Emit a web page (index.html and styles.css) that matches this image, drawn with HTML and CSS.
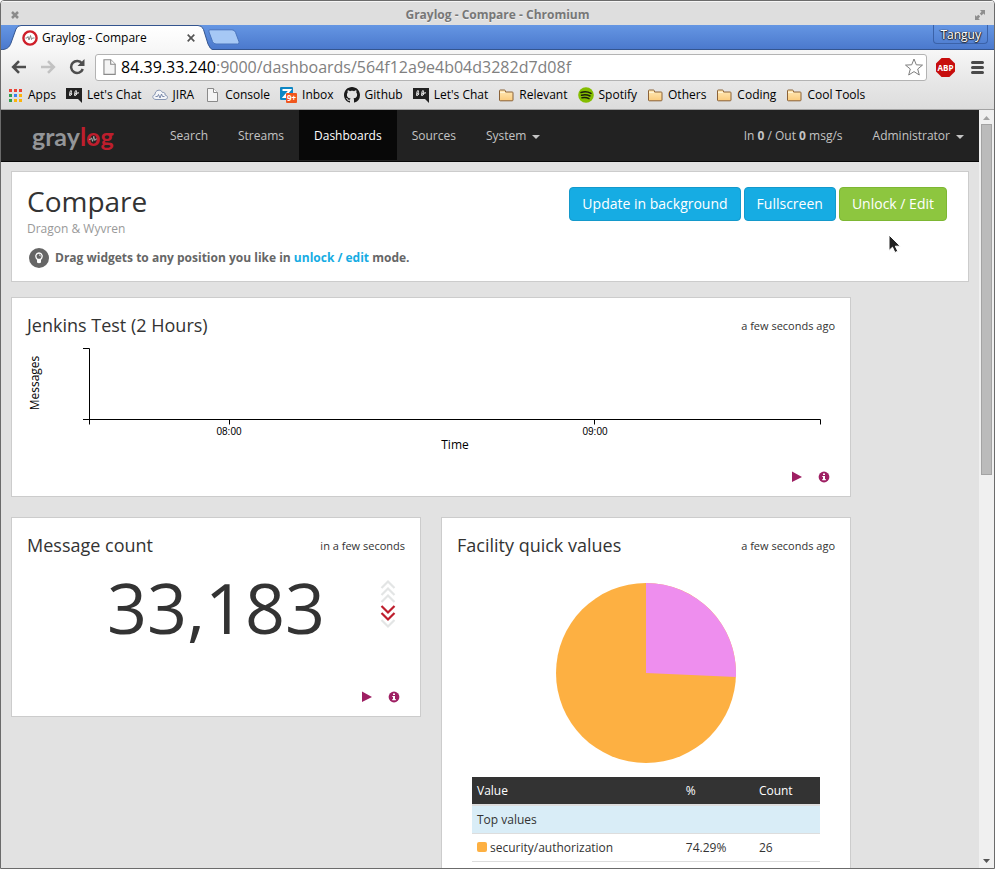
FILE: index.html
```html
<!DOCTYPE html>
<html lang="en">
<head>
<meta charset="utf-8">
<title>Graylog - Compare</title>
<link rel="stylesheet" href="styles.css">
</head>
<body>
<svg class="defs" aria-hidden="true">
  <defs>
    <linearGradient id="folderFill" x1="0" y1="0" x2="0" y2="1"><stop offset="0" stop-color="#ffeab8"/><stop offset="1" stop-color="#fbcb7c"/></linearGradient>
    <linearGradient id="tabFill" x1="0" y1="0" x2="0" y2="1"><stop offset="0" stop-color="#fff"/><stop offset="1" stop-color="#f7f7f7"/></linearGradient>
    <symbol id="folder" viewBox="0 0 16 16"><path d="M1.500 13V3.800q0-.8.8-.8h4.200q.7 0 .8.8l.3 1.200h6.600q.8 0 .8.8V13q0 .8-.8.8H2.300q-.8 0-.8-.8z" fill="url(#folderFill)" stroke="#8a6238"/><path d="M2 5.500h5" stroke="#fff4d6"/></symbol>
    <symbol id="page" viewBox="0 0 16 16"><path d="M3.500 1.500h6l4 4v9h-10z" fill="#f4f4f4" stroke="#8a8a8a"/><path d="M9.500 1.500v4h4" fill="#fff" stroke="#8a8a8a"/></symbol>
    <symbol id="chat" viewBox="0 0 16 16"><path d="M0 1h16v15l-4-4H0z" fill="#222"/><path d="M3 8.500C5.500 7 6 3.500 5 3.500S3 8.500 4.200 8.500 6.500 6.200 5.300 6.200M8 8.500c2.500-1.500 3-5 2-5S8 8.500 9.200 8.500s2.300-2.300 1.100-2.300l2.700-.4" fill="none" stroke="#fff"/></symbol>
    <symbol id="play" viewBox="0 0 10 12"><path d="M0 .5l10 5.500-10 5z" fill="#9e1f63"/></symbol>
    <symbol id="info" viewBox="0 0 12 12"><circle cx="6" cy="6" r="5.400" fill="#9e1f63"/><path d="M5 2.500h2v1.500H5zM4.300 5H7v3h.8v1.200H4.300V8H5V6h-.7z" fill="#fff"/></symbol>
  </defs>
</svg>
<div class="window">
  <header class="titlebar">
    <button class="win-btn" aria-label="Close window"><svg width="10" height="10" viewBox="0 0 10 10"><path d="M2 2l6 6M8 2L2 8" stroke="#8b8b8b" stroke-width="2.500"/></svg></button>
    <span class="win-title">Graylog - Compare - Chromium</span>
    <button class="win-btn" aria-label="Maximize window"><svg width="10" height="10" viewBox="0 0 10 10"><path d="M5 0h5v5L8.500 3.500 6.500 5.500 4.800 3.600 6.600 1.700zM5 10H0V5l1.500 1.500 1.800-1.800 1.900 1.800L3.400 8.400z" fill="#8e8e8e"/></svg></button>
  </header>
  <div class="tabstrip">
    <div class="tab">
      <svg class="tab-shape" viewBox="0 0 212 25" preserveAspectRatio="none"><path d="M0 25C6 24 8 23 10 18L15 4q1.500-3.500 5-3.500H197q4 0 5.500 4L207 19q2 5 5 6z" fill="url(#tabFill)"/><path d="M0 25C6 24 8 23 10 18L15 4q1.500-3.500 5-3.500H197q4 0 5.500 4L207 19q2 5 5 6" fill="none" stroke="#34558f"/></svg>
      <svg width="16" height="16" viewBox="0 0 16 16"><circle cx="8" cy="8" r="6.600" fill="#fff" stroke="#cf1f2a" stroke-width="2.400"/><path d="M3.500 8h1.500l1-1.500 1 3.500 1.500-4.500 1 4 1-1.500h2" fill="none" stroke="#777" stroke-width=".9"/></svg>
      <span class="tab-name">Graylog - Compare</span>
      <button class="tab-close" aria-label="Close tab"><svg width="8" height="8" viewBox="0 0 8 8"><path d="M.7.7l6.600 6.600M7.300.7L.7 7.300" stroke="#555" stroke-width="1.700"/></svg></button>
    </div>
    <button class="new-tab" aria-label="New tab"><svg width="32" height="16" viewBox="0 0 32 16"><path d="M2 .8h22q2.500 0 3.500 2.500l3.500 9.500q.8 2.200-1.500 2.200H8q-2.500 0-3.500-2.500L1 3Q.2.8 2 .8z" fill="#a6c8f5" stroke="#4a74bd"/></svg></button>
    <button class="profile">Tanguy</button>
  </div>
  <div class="toolbar">
    <button class="tool" aria-label="Back"><svg width="16" height="16" viewBox="0 0 16 16"><path d="M15 8H3M8 2.200L2.200 8 8 13.800" fill="none" stroke="#4d4d4d" stroke-width="2.600"/></svg></button>
    <button class="tool" aria-label="Forward"><svg width="16" height="16" viewBox="0 0 16 16"><path d="M1 8h12M8 2.200L13.800 8 8 13.800" fill="none" stroke="#c2c2c2" stroke-width="2.600"/></svg></button>
    <button class="tool" aria-label="Reload"><svg width="16" height="16" viewBox="0 0 16 16"><path d="M13 4.500A6 6 0 1 0 13.800 10" fill="none" stroke="#4d4d4d" stroke-width="2.500"/><path d="M15.500 0v7H8.500z" fill="#4d4d4d"/></svg></button>
    <div class="omnibox">
      <svg width="18" height="18"><use href="#page"/></svg>
      <label class="host" for="url">84.39.33.240</label>
      <input id="url" class="url" type="text" value=":9000/dashboards/564f12a9e4b04d3282d7d08f">
      <button class="star" aria-label="Bookmark this page"><svg width="18" height="18" viewBox="0 0 18 18"><path d="M9 1l2.300 5.800 6.200.3-4.800 3.900 1.600 6L9 13.600 3.700 17l1.600-6L.5 7.100l6.200-.3z" fill="#fff" stroke="#7d7d7d" stroke-linejoin="round"/></svg></button>
    </div>
    <button class="tool abp" aria-label="Adblock Plus"><svg width="19" height="19" viewBox="0 0 19 19"><path d="M5.600 0h7.800L19 5.600v7.800L13.400 19H5.600L0 13.400V5.600z" fill="#c70d0d"/><text x="9.500" y="13" text-anchor="middle" class="abp-text">ABP</text></svg></button>
    <button class="tool" aria-label="Menu"><svg width="13" height="13" viewBox="0 0 13 13"><path d="M1.500 1.500h10M1.500 6.500h10M1.500 11.500h10" stroke="#4a4a4a" stroke-width="3" stroke-linecap="round"/></svg></button>
  </div>
  <nav class="bookmarks" aria-label="Bookmarks">
    <a href="#"><svg width="15" height="16" viewBox="0 0 15 16"><g fill="#ea4335"><path d="M1 2h3v3H1zM6 2h3v3H6zM11 2h3v3h-3z"/></g><path d="M1 7h3v3H1zM1 12h3v3H1z" fill="#2f9e4f"/><path d="M6 7h3v3H6z" fill="#3b82f0"/><path d="M11 7h3v3h-3zM6 12h3v3H6zM11 12h3v3h-3z" fill="#fbb40a"/></svg>Apps</a>
    <a href="#"><svg width="16" height="16"><use href="#chat"/></svg>Let's Chat</a>
    <a href="#"><svg width="16" height="16" viewBox="0 0 16 16"><path d="M4 12.500C.5 12.500-.5 8.500 3 7.500 3 3 8.500 1.500 10.500 5.500c2-.5 3 1 2.500 2.500 3.500.5 3 4.500 0 4.500z" fill="#f3f5f8" stroke="#8796b3"/><path d="M3.500 9.500h2l1-2 1.500 3.500 1.500-4 1 2.500h2" fill="none" stroke="#6f7fa3" stroke-width=".9"/></svg>JIRA</a>
    <a href="#"><svg width="16" height="16"><use href="#page"/></svg>Console</a>
    <a href="#"><svg width="17" height="16" viewBox="0 0 17 16"><rect width="13" height="13" y="0" rx="1" fill="#0d86c4"/><path d="M2.500 3h7.500L4 10h4" fill="none" stroke="#fff" stroke-width="2"/><rect x="6" y="6" width="11" height="10" rx="1" fill="#f0561d"/><text x="11.500" y="14" text-anchor="middle" class="badge-text">9+</text></svg>Inbox</a>
    <a href="#"><svg width="16" height="16" viewBox="0 0 16 16"><path d="M8 0C3.580 0 0 3.580 0 8c0 3.540 2.290 6.530 5.470 7.590.4.070.55-.17.55-.38 0-.19-.01-.82-.01-1.490-2.010.37-2.530-.49-2.690-.94-.09-.23-.48-.94-.82-1.130-.28-.15-.68-.52-.01-.53.63-.01 1.080.58 1.230.82.72 1.210 1.870.87 2.330.66.07-.52.28-.87.51-1.070-1.780-.2-3.640-.89-3.640-3.950 0-.87.31-1.590.82-2.150-.08-.2-.36-1.020.08-2.120 0 0 .67-.21 2.200.82.64-.18 1.320-.27 2-.27s1.360.09 2 .27c1.530-1.040 2.200-.82 2.200-.82.44 1.100.16 1.920.08 2.120.51.56.82 1.270.82 2.150 0 3.070-1.870 3.750-3.650 3.950.29.25.54.73.54 1.480 0 1.070-.01 1.930-.01 2.200 0 .21.15.46.55.38A8.010 8.010 0 0 0 16 8c0-4.420-3.580-8-8-8z" fill="#1b1b1b"/></svg>Github</a>
    <a href="#"><svg width="16" height="16"><use href="#chat"/></svg>Let's Chat</a>
    <a href="#"><svg width="16" height="16"><use href="#folder"/></svg>Relevant</a>
    <a href="#"><svg width="16" height="16" viewBox="0 0 16 16"><circle cx="8" cy="8" r="7.800" fill="#84bd00"/><path d="M3 5.500c3-1 7-.8 10 .8M3.500 8.200c2.800-.8 6-.5 8.500.8M4 10.800c2.500-.6 4.800-.4 7 .8" fill="none" stroke="#1a1f0a" stroke-width="1.500" stroke-linecap="round"/></svg>Spotify</a>
    <a href="#"><svg width="16" height="16"><use href="#folder"/></svg>Others</a>
    <a href="#"><svg width="16" height="16"><use href="#folder"/></svg>Coding</a>
    <a href="#"><svg width="16" height="16"><use href="#folder"/></svg>Cool Tools</a>
  </nav>
  <div class="viewport">
    <div class="page">
      <nav class="navbar">
        <a class="brand" href="#"><span>gray</span><span class="brand-log">l<span class="brand-o">o<svg viewBox="0 0 10 10"><path d="M0 5.500h2l1-2 1.500 4.500L6 1.500l1.300 5.500 1-2H10" fill="none" stroke="#b9b9b9"/></svg></span>g</span></a>
        <ul class="menu">
          <li><a href="#">Search</a></li>
          <li><a href="#">Streams</a></li>
          <li><a class="active" href="#">Dashboards</a></li>
          <li><a href="#">Sources</a></li>
          <li><a href="#">System<i class="caret"></i></a></li>
        </ul>
        <ul class="menu menu-right">
          <li><a href="#">In <b>0</b> / Out <b>0</b> msg/s</a></li>
          <li><a href="#">Administrator<i class="caret"></i></a></li>
        </ul>
      </nav>
      <main class="content">
        <section class="panel heading">
          <div>
            <h1>Compare</h1>
            <p class="subtitle">Dragon &amp; Wyvren</p>
            <p class="hint"><svg width="20" height="20" viewBox="0 0 20 20"><circle cx="10" cy="10" r="10" fill="#666"/><path d="M8.500 11.500C5.500 8.500 7 5 10 5s4.500 3.500 1.500 6.500z" fill="none" stroke="#fff" stroke-width="1.300"/><path d="M8 11h4v3.500q-2 1.500-4 0z" fill="#fff"/><path d="M10 6.800q1.200 0 1.500 1.500" fill="none" stroke="#fff" stroke-width=".8"/></svg><span>Drag widgets to any position you like in <a href="#">unlock / edit</a> mode.</span></p>
          </div>
          <div class="actions">
            <button class="btn">Update in background</button>
            <button class="btn">Fullscreen</button>
            <button class="btn btn-green">Unlock / Edit</button>
          </div>
        </section>
        <div class="widgets">
          <article class="panel widget wide">
            <header><h2>Jenkins Test (2 Hours)</h2><time>a few seconds ago</time></header>
            <svg class="chart" viewBox="0 0 808 116" role="img" aria-label="Messages over time">
              <path d="M56 10.500h6.500v76M56 81.500h737.500v5M202.500 81.500v5M567.500 81.500v5" fill="none" stroke="#000"/>
              <text class="tick" x="202" y="97">08:00</text>
              <text class="tick" x="568" y="97">09:00</text>
              <text class="axis" x="428" y="111">Time</text>
              <text class="axis" transform="translate(12 45) rotate(-90)">Messages</text>
            </svg>
            <footer><button aria-label="Replay search"><svg width="10" height="12"><use href="#play"/></svg></button><button aria-label="Show info"><svg width="12" height="12"><use href="#info"/></svg></button></footer>
          </article>
          <article class="panel widget">
            <header><h2>Message count</h2><time>in a few seconds</time></header>
            <div class="count">
              <span class="number">33,183</span>
              <svg class="trend" width="16" height="50" viewBox="0 0 16 50"><g fill="none" stroke-width="2.200"><path d="M1.500 9L8 2.500 14.500 9M1.500 16L8 9.500l6.500 6.500M1.500 23L8 16.500l6.500 6.500M1.500 41L8 47.500l6.500-6.500" stroke="#e3e5e5"/><path d="M1.500 27L8 33.500l6.500-6.500M1.500 34L8 40.500l6.500-6.500" stroke="#be1e2d"/></g></svg>
            </div>
            <footer><button aria-label="Replay search"><svg width="10" height="12"><use href="#play"/></svg></button><button aria-label="Show info"><svg width="12" height="12"><use href="#info"/></svg></button></footer>
          </article>
          <article class="panel widget tall">
            <header><h2>Facility quick values</h2><time>a few seconds ago</time></header>
            <svg class="pie" width="180" height="180" viewBox="-90 -90 180 180" role="img" aria-label="Share of each facility"><circle r="90" fill="#fdb042"/><path d="M0 0V-90A90 90 0 0 1 89.900 4z" fill="#ee8eee"/></svg>
            <table>
              <colgroup><col class="col-value"><col class="col-share"><col class="col-count"></colgroup>
              <thead><tr><th>Value</th><th>%</th><th>Count</th></tr></thead>
              <tbody>
                <tr class="group"><td colspan="3">Top values</td></tr>
                <tr><td><i class="swatch"></i>security/authorization</td><td>74.29%</td><td>26</td></tr>
              </tbody>
            </table>
          </article>
        </div>
      </main>
    </div>
    <div class="scrollbar" aria-hidden="true">
      <svg width="7" height="4" viewBox="0 0 7 4"><path d="M3.500 0L7 4H0z" fill="#a3a3a3"/></svg>
      <div class="thumb"></div>
      <svg width="7" height="4" viewBox="0 0 7 4"><path d="M0 0h7L3.500 4z" fill="#555"/></svg>
    </div>
  </div>
  <svg class="cursor" width="14" height="20" viewBox="0 0 14 20"><path d="M1 1v15.500l3.500-3.300 2.400 5.300 2.900-1.300-2.500-5h5z" fill="#222" stroke="#fff"/></svg>
</div>
</body>
</html>
```
FILE: styles.css
```css
* { box-sizing: border-box; }

body {
  margin: 0;
  font: 12px/18px "Open Sans", sans-serif;
  color: #333;
}

h1, h2, p, ul { margin: 0; padding: 0; font-weight: 400; }
a { color: inherit; text-decoration: none; }
svg { display: block; flex: none; }
button {
  padding: 0;
  border: 0;
  background: none;
  font: inherit;
  color: inherit;
}

.defs { position: absolute; width: 0; height: 0; }

/* Browser window */
.window {
  position: relative;
  display: flex;
  flex-direction: column;
  height: 100vh;
  overflow: hidden;
  border: 1px solid #6b6b6b;
  border-radius: 4px 4px 0 0;
  color: #000;
}

.titlebar {
  display: flex;
  align-items: center;
  justify-content: space-between;
  height: 24px;
  padding: 2px 9px 0;
  border-top: 1px solid #f6f6f6;
  background: #dedede;
}
.win-title { font-weight: 700; color: #777; text-shadow: 0 1px #f0f0f0; }

.tabstrip {
  display: flex;
  align-items: center;
  height: 25px;
  background: linear-gradient(#6596e3, #4b79cd);
  border-bottom: 1px solid #34558f;
}
.tab {
  position: relative;
  display: flex;
  align-items: center;
  gap: 4px;
  width: 212px;
  height: 25px;
  margin-bottom: -1px;
  padding: 0 17px 0 21px;
}
.tab > * { position: relative; }
.tab > .tab-shape { position: absolute; inset: 0; width: 100%; height: 100%; }
.tab-name { flex: 1; white-space: nowrap; }
.tab-close { padding: 1px; }
.new-tab { margin-left: -5px; }
.profile {
  align-self: flex-start;
  height: 19px;
  margin-left: auto;
  margin-right: 6px;
  padding: 0 6px;
  border: 1px solid #3b62a8;
  border-top: 0;
  border-radius: 0 0 4px 4px;
  line-height: 20px;
  color: #fff;
  text-shadow: 0 1px 1px #222, 1px 0 1px #222, -1px 0 1px #333;
}

.toolbar {
  display: flex;
  align-items: center;
  gap: 13px;
  height: 34px;
  padding: 0 10px;
  background: linear-gradient(#f7f7f7, #e6e6e6);
}
.omnibox {
  display: flex;
  flex: 1;
  align-items: center;
  height: 27px;
  margin: 0 -4px 0 -3px;
  padding: 0 3px 0 4px;
  border: 1px solid #b3b3b3;
  border-radius: 3px;
  background: #fff;
  font-size: 16px;
}
.host { padding-left: 3px; }
.url {
  flex: 1;
  min-width: 0;
  padding: 0;
  border: 0;
  outline: 0;
  background: none;
  font: inherit;
  color: #808080;
}
.abp { margin-right: 3px; }
.abp-text { font: 700 8px "Open Sans", sans-serif; fill: #fff; }
.badge-text { font: 700 8px "Open Sans", sans-serif; fill: #fff; }

.bookmarks {
  display: flex;
  gap: 10px;
  height: 26px;
  padding: 2px 7px 0;
  border-bottom: 1px solid #a3a3a3;
  background: linear-gradient(#e6e6e6, #dcdcdc);
}
.bookmarks a {
  display: flex;
  align-items: center;
  gap: 5px;
  height: 18px;
  white-space: nowrap;
}

/* Page */
.viewport {
  display: flex;
  flex: 1;
  min-height: 0;
  color: #333;
}
.page {
  flex: 1;
  min-width: 0;
  overflow: hidden;
  background: #e2e2e2;
}
.scrollbar {
  display: flex;
  flex-direction: column;
  align-items: center;
  gap: 4px;
  width: 15px;
  padding: 6px 0 5px;
  background: #f0f0f0;
}
.thumb {
  width: 11px;
  height: 47%;
  margin-bottom: auto;
  border: 1px solid #a3a3a3;
  background: #bbb;
}

.navbar {
  display: flex;
  height: 52px;
  border-bottom: 1px solid #080808;
  background: #222;
}
.brand {
  width: 123px;
  margin-left: 31px;
  font: 700 25px/52px Lato, sans-serif;
  color: #939598;
}
.brand-log { color: #be1e2d; }
.brand-o { position: relative; }
.brand-o svg {
  position: absolute;
  left: 3px;
  bottom: 8px;
  width: 8px;
  height: 8px;
}
.menu { display: flex; list-style: none; }
.menu a {
  display: flex;
  align-items: center;
  height: 50px;
  padding: 2px 15px 0;
  white-space: pre;
  color: #c4c4c4;
}
.menu .active { background: #080808; color: #fff; }
.menu-right { margin-left: auto; }
.caret {
  margin: 1px 0 0 6px;
  border: 4px solid transparent;
  border-top-color: currentColor;
  border-bottom: 0;
}

.content { padding: 9px 10px 0; }
.panel { border: 1px solid #ccc; background: #fff; }

.heading {
  display: flex;
  justify-content: space-between;
  padding: 15px 21px 13px 15px;
}
h1 { font-size: 28px; line-height: 28px; }
.subtitle { margin-top: 5px; color: #999; }
.hint {
  display: flex;
  align-items: center;
  gap: 6px;
  margin-top: 10px;
  padding-left: 2px;
  font-weight: 700;
  color: #666;
}
.hint a { color: #16ace3; }
.actions { display: flex; align-items: flex-start; gap: 3px; }
.btn {
  height: 34px;
  padding: 0 12px;
  border: 1px solid #1499cb;
  border-radius: 4px;
  background: #16ace3;
  font-size: 14px;
  white-space: nowrap;
  color: #fff;
}
.btn-green { border-color: #7db733; background: #8dc63f; }

.widgets {
  display: grid;
  grid-template-columns: repeat(2, minmax(0, 410px));
  grid-auto-rows: 200px;
  gap: 20px;
  margin-top: 15px;
}
.wide { grid-column: span 2; }
.tall { grid-row: span 2; }
.widget {
  display: flex;
  flex-direction: column;
  padding: 15px 15px 13px;
}
.widget header {
  display: flex;
  align-items: center;
  justify-content: space-between;
}
h2 { font-size: 18px; line-height: 25px; }
time { font-size: 11px; }
.widget footer {
  display: flex;
  justify-content: flex-end;
  gap: 16px;
  margin-top: auto;
  padding-right: 5px;
}

.chart { width: 100%; }
.chart text { text-anchor: middle; fill: #000; }
.axis { font-size: 12px; }
.tick { font: 10px "Liberation Sans", sans-serif; }

.count {
  display: grid;
  grid-template-columns: 1fr auto 1fr;
  align-items: center;
  margin-top: 14px;
}
.number { grid-column: 2; font-size: 70px; line-height: 70px; }
.trend { justify-self: end; margin: 0 9px 6px 0; }

.pie { margin: 25px auto 14px; }
table {
  table-layout: fixed;
  width: auto;
  margin: 0 15px;
  border-collapse: collapse;
}
.col-value { width: 60%; }
.col-share { width: 21%; }
.col-count { width: 19%; }
th, td {
  height: 28px;
  padding: 0 5px;
  border-bottom: 1px solid #ddd;
  text-align: left;
  font-weight: 400;
  white-space: nowrap;
}
td { padding-top: 2px; }
th { border-bottom-width: 2px; background: #333; color: #fff; }
.group td { background: #d9edf7; }
.swatch {
  display: inline-block;
  width: 10px;
  height: 10px;
  margin-right: 3px;
  border-radius: 2px;
  background: #fdb042;
}

.cursor { position: absolute; left: 887px; top: 233px; }
```
